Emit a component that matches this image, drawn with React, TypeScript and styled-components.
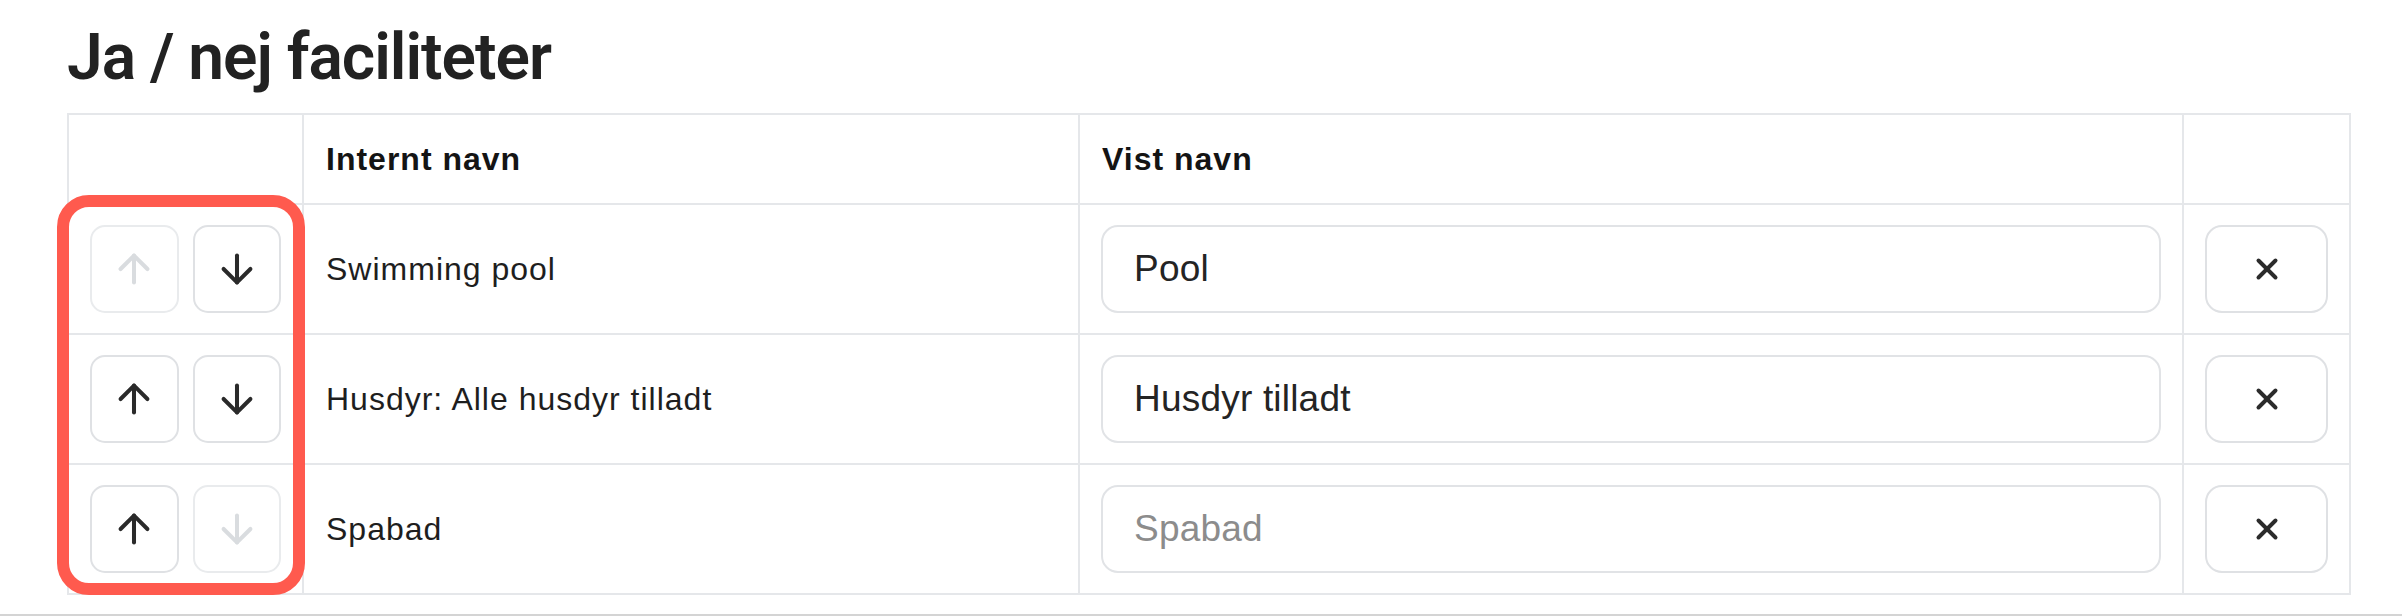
import React from "react";
import styled, { createGlobalStyle } from "styled-components";

const GlobalStyle = createGlobalStyle`
  html, body {
    margin: 0;
    padding: 0;
    background: #ffffff;
  }
  body {
    font-family: "Liberation Sans", Arial, sans-serif;
    color: #1f1f1f;
  }
  * { box-sizing: border-box; }
`;

const Page = styled.div`
  width: 2402px;
  height: 616px;
  overflow: hidden;
  display: flex;
  flex-direction: column;
`;

const Section = styled.section`
  padding: 24px 0 0 67px;
`;

const Title = styled.h1`
  margin: 0 0 22px 0;
  font-family: Roboto, "Liberation Sans", Arial, sans-serif;
  font-weight: 600;
  font-size: 64px;
  line-height: 67px;
  color: #222222;
  letter-spacing: -1px;
`;

const TableWrap = styled.div`
  position: relative;
  width: 2282px;
`;

const Table = styled.table`
  width: 2282px;
  border-collapse: collapse;
  table-layout: fixed;
`;

const Col = styled.col<{ $w: number }>`
  width: ${(p) => p.$w}px;
`;

const HeadRow = styled.tr`
  height: 90px;
`;

const BodyRow = styled.tr`
  height: 130px;
`;

const HeadCell = styled.th`
  border: 2px solid #e5e7ea;
  padding: 0 22px;
  text-align: left;
  font-weight: 700;
  font-size: 32px;
  letter-spacing: 1px;
  color: #141414;
`;

const Cell = styled.td`
  border: 2px solid #e5e7ea;
  padding: 0 21px;
  vertical-align: middle;
  font-size: 32px;
  letter-spacing: 1px;
  color: #1e1e1e;
`;

const TextCell = styled(Cell)`
  padding-left: 22px;
`;

const ArrowGroup = styled.div`
  display: flex;
  gap: 14px;
`;

const ArrowButton = styled.button<{ $off?: boolean }>`
  width: 90px;
  height: 88px;
  display: flex;
  align-items: center;
  justify-content: center;
  padding: 0;
  background: #ffffff;
  border: 2px solid ${(p) => (p.$off ? "#e9ebed" : "#dfe1e4")};
  border-radius: 15px;
  color: ${(p) => (p.$off ? "#d9dcdf" : "#2a2a2a")};
  cursor: ${(p) => (p.$off ? "default" : "pointer")};
`;

const NameInput = styled.input`
  display: block;
  width: 100%;
  height: 88px;
  border: 2px solid #e1e3e6;
  border-radius: 17px;
  padding: 0 31px;
  font-family: "Liberation Sans", Arial, sans-serif;
  font-size: 37px;
  letter-spacing: 0.2px;
  color: #242424;
  background: #ffffff;
  outline: none;
  &::placeholder {
    color: #8c8c8c;
  }
`;

const RemoveButton = styled.button`
  width: 123px;
  height: 88px;
  display: flex;
  align-items: center;
  justify-content: center;
  padding: 0;
  background: #ffffff;
  border: 2px solid #dfe1e4;
  border-radius: 17px;
  color: #2b2b2b;
  cursor: pointer;
`;

const Highlight = styled.div`
  position: absolute;
  left: -10px;
  top: 82px;
  width: 248px;
  height: 400px;
  border: 12px solid #ff5a4e;
  border-radius: 32px;
  pointer-events: none;
`;

const BottomRule = styled.div`
  margin-top: auto;
  height: 2px;
  background: #d4d4d4;
`;

const ArrowIcon = ({ dir }: { dir: "up" | "down" }) => (
  <svg width="46" height="46" viewBox="0 0 24 24" fill="none" stroke="currentColor" strokeWidth="2.1" strokeLinecap="round" strokeLinejoin="round">
    {dir === "up" ? (
      <>
        <path d="M12 19V5" />
        <path d="m5 12 7-7 7 7" />
      </>
    ) : (
      <>
        <path d="M12 5v14" />
        <path d="m19 12-7 7-7-7" />
      </>
    )}
  </svg>
);

const CloseIcon = () => (
  <svg width="34" height="34" viewBox="0 0 24 24" fill="none" stroke="currentColor" strokeWidth="2.8" strokeLinecap="round" strokeLinejoin="round">
    <path d="M18 6 6 18" />
    <path d="m6 6 12 12" />
  </svg>
);

type Row = { internal: string; shown: string };

const rows: Row[] = [
  { internal: "Swimming pool", shown: "Pool" },
  { internal: "Husdyr: Alle husdyr tilladt", shown: "Husdyr tilladt" },
  { internal: "Spabad", shown: "" },
];

export default function App() {
  return (
    <Page>
      <GlobalStyle />
      <Section>
        <Title>Ja / nej faciliteter</Title>
        <TableWrap>
          <Table>
            <colgroup>
              <Col $w={235} />
              <Col $w={776} />
              <Col $w={1104} />
              <Col $w={167} />
            </colgroup>
            <thead>
              <HeadRow>
                <HeadCell />
                <HeadCell>Internt navn</HeadCell>
                <HeadCell>Vist navn</HeadCell>
                <HeadCell />
              </HeadRow>
            </thead>
            <tbody>
              {rows.map((r, i) => (
                <BodyRow key={r.internal}>
                  <Cell>
                    <ArrowGroup>
                      <ArrowButton $off={i === 0} aria-label="Flyt op">
                        <ArrowIcon dir="up" />
                      </ArrowButton>
                      <ArrowButton $off={i === rows.length - 1} aria-label="Flyt ned">
                        <ArrowIcon dir="down" />
                      </ArrowButton>
                    </ArrowGroup>
                  </Cell>
                  <TextCell>{r.internal}</TextCell>
                  <Cell>
                    <NameInput defaultValue={r.shown} placeholder={r.internal} />
                  </Cell>
                  <Cell>
                    <RemoveButton aria-label="Fjern">
                      <CloseIcon />
                    </RemoveButton>
                  </Cell>
                </BodyRow>
              ))}
            </tbody>
          </Table>
          <Highlight />
        </TableWrap>
      </Section>
      <BottomRule />
    </Page>
  );
}
